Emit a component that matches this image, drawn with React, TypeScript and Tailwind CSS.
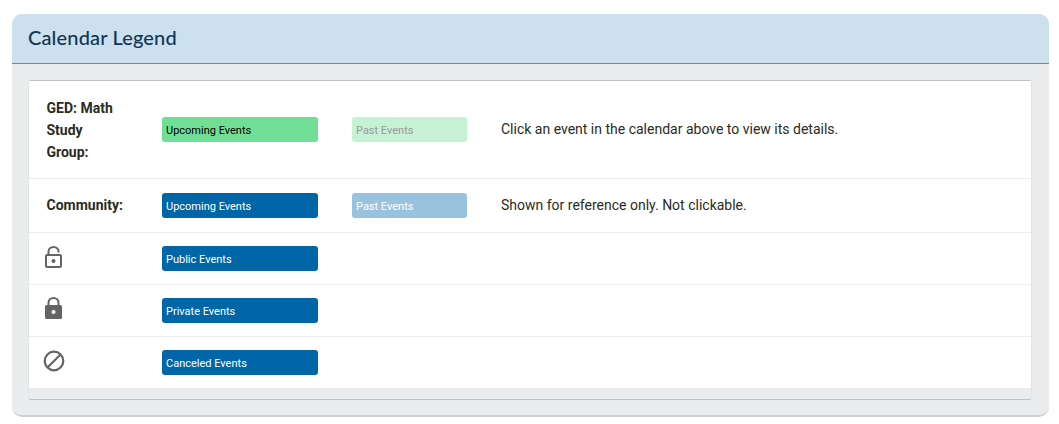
const roboto = "font-['Roboto',sans-serif]";

function Badge({ label, className }: { label: string; className: string }) {
  return (
    <div className={`h-[25px] rounded-[3px] pl-1 text-[11px] leading-[27px] font-normal ${className}`}>{label}</div>
  );
}

function OpenLock() {
  return (
    <svg width="18" height="22" viewBox="0 0 18 22" fill="none" className="block">
      <path d="M3.500 9V5.500a5 4.500 0 0 1 10 0V6.500" stroke="#636466" strokeWidth="2" />
      <rect x="1" y="9" width="15" height="12" rx="1" stroke="#636466" strokeWidth="2" />
      <circle cx="8.500" cy="15" r="2" fill="#636466" />
    </svg>
  );
}

function ClosedLock() {
  return (
    <svg width="18" height="22" viewBox="0 0 18 22" fill="none" className="block">
      <path d="M3.500 9V5.500a5 4.500 0 0 1 10 0V9" stroke="#636466" strokeWidth="2" />
      <rect x="0" y="8" width="17" height="14" rx="1.500" fill="#636466" />
      <circle cx="8.500" cy="15" r="2" fill="#fff" />
    </svg>
  );
}

function Canceled() {
  return (
    <svg width="22" height="22" viewBox="0 0 22 22" fill="none" className="block">
      <circle cx="11" cy="11" r="9.300" stroke="#636466" strokeWidth="2.200" />
      <path d="M4.500 17.500 17.500 4.500" stroke="#636466" strokeWidth="2.200" />
    </svg>
  );
}

export default function App() {
  return (
    <div className={`${roboto} min-h-[424px] bg-white pt-[14px] pl-[12px] pr-[10px] pb-[7px] text-[#2b2b1f]`}>
      <div className="h-[403px] overflow-hidden rounded-[10px] border-b-2 border-[#cfd0d2] bg-[#ebecee]">
        <div className="h-[50px] border-b border-[#5b8db5] bg-[#cde0ee] pl-[16px] pt-[10px]">
          <h2 className="font-['Lato',sans-serif] text-[20px] leading-[26px] tracking-[0.15px] font-medium text-[#0f3557]">Calendar Legend</h2>
        </div>
        <div className="ml-[16px] mr-[17px] mt-[16px] h-[320px] rounded-[3px] border-x border-t border-b border-[#bfc0c2] border-x-[#e2e3e5]">
          <div className="bg-white">
            <div className="flex h-[98px] items-center border-b border-[#ebebeb] pl-[17.5px]">
              <div className="w-[115.5px] pr-[40px] text-[14px] leading-[22px] font-bold">GED: Math Study Group:</div>
              <Badge label="Upcoming Events" className="w-[156px] bg-[#70df95] text-black" />
              <Badge label="Past Events" className="ml-[34px] w-[115px] bg-[#c5f2d4] text-[#999999]" />
              <p className="ml-[34px] text-[14px]">Click an event in the calendar above to view its details.</p>
            </div>
            <div className="flex h-[54px] items-center border-b border-[#ebebeb] pl-[17.5px]">
              <div className="w-[115.5px] text-[14px] font-bold">Community:</div>
              <Badge label="Upcoming Events" className="w-[156px] bg-[#0066a8] text-white" />
              <Badge label="Past Events" className="ml-[34px] w-[115px] bg-[#99c2de] text-white" />
              <p className="ml-[34px] text-[14px]">Shown for reference only. Not clickable.</p>
            </div>
            <div className="flex h-[52px] items-center border-b border-[#ebebeb] pl-[16px]">
              <div className="mb-[4px] w-[117px]"><OpenLock /></div>
              <Badge label="Public Events" className="w-[156px] bg-[#0066a8] text-white" />
            </div>
            <div className="flex h-[52px] items-center border-b border-[#ebebeb] pl-[16px]">
              <div className="mb-[6px] w-[117px]"><ClosedLock /></div>
              <Badge label="Private Events" className="w-[156px] bg-[#0066a8] text-white" />
            </div>
            <div className="flex h-[51px] items-center pl-[14px]">
              <div className="mb-[3px] w-[119px]"><Canceled /></div>
              <Badge label="Canceled Events" className="w-[156px] bg-[#0066a8] text-white" />
            </div>
          </div>
        </div>
      </div>
    </div>
  );
}
